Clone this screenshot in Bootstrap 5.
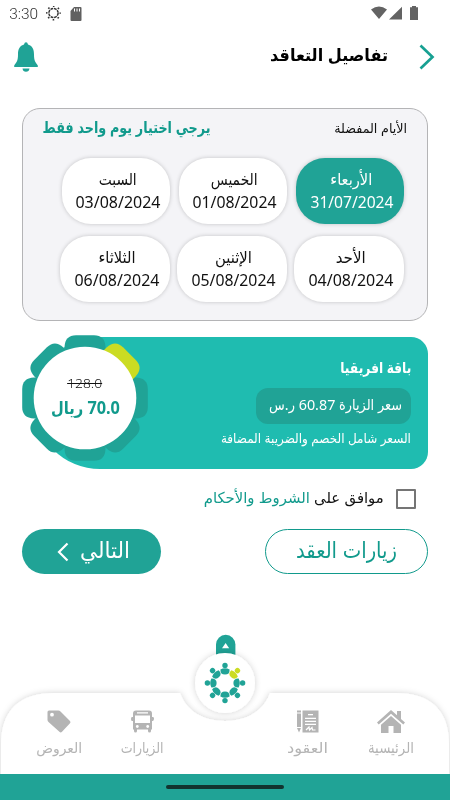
<!DOCTYPE html>
<html lang="ar" dir="rtl">
<head>
<meta charset="utf-8">
<meta name="viewport" content="width=device-width, initial-scale=1">
<title>تفاصيل التعاقد</title>
<link href="https://cdn.jsdelivr.net/npm/bootstrap@5.3.0/dist/css/bootstrap.min.css" rel="stylesheet">
<style>
:root{--teal:#20a396;--aqua:#1fbcb0;--ink:#111}
body{font-family:"Noto Sans","DejaVu Sans Condensed","DejaVu Sans",sans-serif;color:var(--ink);background:#fff;overflow:hidden}
.screen{width:450px;height:800px}
svg{display:block;flex:none}
.fit{display:inline-block;white-space:nowrap;flex:none;direction:rtl}
.fit>span{display:inline-block;transform-origin:100% 50%}
.teal{color:#119a8c}
.status{height:28px;padding:0 30px 0 9px;font:300 15px/28px Roboto,sans-serif;color:#333}
.topbar{height:80px;padding:2px 15px 24px 14px}
.topbar h1{font-size:17px;line-height:28px;margin:0 31px 4px 0}
.days{margin:0 22px;height:213px;border:1px solid #b4b4b6;border-radius:18px;background:#f4f4f7;padding:8px 19px 0}
.days-head{height:22px;line-height:22px;padding:0 1px}
.days-head .hint{font-size:15.5px;font-weight:700;line-height:20px}
.days-head .cap{font-size:13px}
.slots{margin-top:19px;gap:12px}
.slot-row{gap:9px;margin-right:4px}
.slot-row.wide{gap:7px}
.slot{width:108px;height:66px;border-radius:29px;background:#fff;box-shadow:0 0 4px rgba(0,0,0,.2);font-size:16px;line-height:23px;padding:10px 0 0 3px}
.wide .slot{width:110px}
.slot.on{background:var(--teal);color:#fff}
.slot .date{font-size:15.5px}
.offer{margin:16px 22px 0;height:132px}
.offer-bg{background:var(--aqua);border-radius:66px 17px 17px 66px;margin-left:12px;color:#fff;padding:16px 17px 0 0;height:132px;width:394px}
.wheel{position:absolute;left:0;top:-2px;width:126px;height:126px}
.price{position:absolute;left:12px;top:35px;width:102px;height:60px}
.price .old{font-size:13.5px;line-height:22px;font-weight:300}
.price .old>span{text-decoration:line-through}
.price .now{font-size:17px;line-height:28px;font-weight:700}
.offer .ttl{font-size:15px;font-weight:700;line-height:28px}
.offer .rate{height:36px;width:155px;border-radius:12px;background:var(--teal);margin-top:7px;font-size:15px;line-height:32px;padding-right:9px}
.offer .note{font-size:13px;line-height:26px;margin-top:1px}
.terms{height:30px;margin:15px 34px 0;gap:12px;font-size:15px;line-height:22px}
.terms .fit{margin-bottom:4px}
.tick{width:20px;height:20px;border:2px solid #757575;border-radius:1px}
.actions{margin:15px 22px 0}
.pill{height:45px;border-radius:23px;font-size:22px;line-height:34px;padding:0 2px 4px 0;font-weight:400}
.pill.line{width:163px;border:1px solid #119a8c;color:#119a8c;padding:0 2px 6px 2px}
.pill.full{width:139px;background:var(--teal);border:0;color:#fff;gap:14px;padding:0 0 0 6px}
.pill.full .fit{margin-bottom:6px}
.dock{height:160px;width:450px}
.dock-bg{position:absolute;left:0;top:0}
.tabs{position:absolute;left:0;right:0;top:96px;color:#b4b4b4;font-size:14.5px}
.tab-item{width:70px;line-height:22px;gap:3px}
#tab-home{margin-right:24px}
#tab-deals{margin-right:13px}
#tab-visits{margin-right:96px}
#tab-offers{margin-right:13px}
.homebar{background:var(--teal);height:26px}
.homebar i{width:118px;height:4px;border-radius:2px;background:#12332f}
</style>
<script src="https://cdn.jsdelivr.net/npm/bootstrap@5.3.0/dist/js/bootstrap.bundle.min.js"></script>
</head>
<body>
<div class="screen d-flex flex-column">
  <div class="status d-flex align-items-center" dir="ltr">
    <span class="fit" data-w="29"><span dir="ltr">3:30</span></span>
    <svg class="ms-2" width="16" height="16" viewBox="0 0 16 16" fill="none" stroke="#333"><circle cx="7.500" cy="7" r="4.600" stroke-width="1.500" stroke-dasharray="2.800 .8"/><circle cx="7.500" cy="7" r="6.700" stroke-width="1.500" stroke-dasharray="1.600 3.660" stroke-dashoffset=".8"/></svg>
    <svg width="12" height="15" viewBox="0 0 12 15" class="ms-2"><path fill="#606060" d="M4 0h6.500q1 0 1 1v12q0 1-1 1h-9q-1 0-1-1V4z"/><path stroke="#fff" d="M4.500 1.500v3M7 1.500v3M9.500 1.500v3"/></svg>
    <svg class="ms-auto" width="49" height="16" viewBox="0 0 49 16" fill="#636363"><path d="M0 3.500Q8 -2.300 16 3.500L8 13zM18 13.500 31 .7v12.800zM39 1.200h2V0h4v1.200h2v12.800h-8z"/></svg>
  </div>

  <header class="topbar d-flex align-items-center">
    <svg width="16" height="26" viewBox="0 0 16 26" fill="none" stroke="#17a092" stroke-width="2.700"><path d="M1.500 1.500 13.500 13 1.500 24.500"/></svg>
    <h1 class="fw-bold text-black"><span class="fit" data-w="118"><span>تفاصيل التعاقد</span></span></h1>
    <svg class="me-auto" width="24" height="30" viewBox="0 0 24 30" fill="#20a396"><path d="M10 2.500Q10.500.3 12 .3T14 2.500C19 4 20 8 20 12.500 20 19 21.500 20 23.800 23.500V25H.2V23.500C2.500 20 4 19 4 12.500 4 8 5 4 10 2.500zM8.500 26.500h7Q15 29.700 12 29.700T8.500 26.500z"/></svg>
  </header>

  <section class="days">
    <div class="days-head d-flex justify-content-between">
      <span class="fit cap" data-w="73"><span>الأيام المفضلة</span></span>
      <span class="fit hint teal" data-w="168"><span>يرجي اختيار يوم واحد فقط</span></span>
    </div>
    <div class="slots d-flex flex-column">
      <div class="slot-row d-flex">
        <div class="slot on d-flex flex-column align-items-center"><span class="fit" data-w="42"><span>الأربعاء</span></span><span class="fit date" data-w="83"><span dir="ltr">31/07/2024</span></span></div>
        <div class="slot d-flex flex-column align-items-center"><span class="fit" data-w="47"><span>الخميس</span></span><span class="fit date" data-w="84"><span dir="ltr">01/08/2024</span></span></div>
        <div class="slot d-flex flex-column align-items-center"><span class="fit" data-w="38"><span>السبت</span></span><span class="fit date" data-w="85"><span dir="ltr">03/08/2024</span></span></div>
      </div>
      <div class="slot-row wide d-flex">
        <div class="slot d-flex flex-column align-items-center"><span class="fit" data-w="30"><span>الأحد</span></span><span class="fit date" data-w="85"><span dir="ltr">04/08/2024</span></span></div>
        <div class="slot d-flex flex-column align-items-center"><span class="fit" data-w="37"><span>الإثنين</span></span><span class="fit date" data-w="84"><span dir="ltr">05/08/2024</span></span></div>
        <div class="slot d-flex flex-column align-items-center"><span class="fit" data-w="37"><span>الثلاثاء</span></span><span class="fit date" data-w="85"><span dir="ltr">06/08/2024</span></span></div>
      </div>
    </div>
  </section>

  <section class="offer position-relative">
    <div class="offer-bg d-flex flex-column align-items-start">
      <span class="fit ttl" data-w="71"><span>باقة افريقيا</span></span>
      <div class="rate"><span class="fit" data-w="133"><span>سعر الزيارة 60.87 ر.س</span></span></div>
      <span class="fit note" data-w="190"><span>السعر شامل الخصم والضريبة المضافة</span></span>
    </div>
    <svg class="wheel" viewBox="-63 -63 126 126" fill="#20a396">
      <defs><path id="petal" d="M-20.500-40V-51Q-20-62.800-9-62.800H9Q20-62.800 20.500-51V-40z"/></defs>
      <use href="#petal"/><use href="#petal" transform="rotate(90)"/><use href="#petal" transform="rotate(135)"/><use href="#petal" transform="rotate(180)"/><use href="#petal" transform="rotate(225)"/><use href="#petal" transform="rotate(270)"/><use href="#petal" transform="rotate(315)"/><use href="#petal" transform="rotate(45)" fill="#cbdc23"/>
      <circle r="51.300" fill="#fff"/>
    </svg>
    <div class="price d-flex flex-column align-items-center">
      <span class="fit old" data-w="35"><span dir="ltr">128.0</span></span>
      <span class="fit now teal" data-w="69"><span>70.0 ريال</span></span>
    </div>
  </section>

  <div class="terms d-flex align-items-center">
    <span class="tick"></span>
    <span class="fit" data-w="180"><span>موافق على <span class="teal">الشروط والأحكام</span></span></span>
  </div>

  <div class="actions d-flex justify-content-between">
    <button class="btn pill line"><span class="fit" data-w="101"><span>زيارات العقد</span></span></button>
    <button class="btn pill full d-flex align-items-center justify-content-center"><span class="fit" data-w="50"><span>التالي</span></span><svg width="12" height="20" viewBox="0 0 12 20" fill="none" stroke="#fff" stroke-width="2.200"><path d="M10.500 1.500 2 10l8.500 8.500"/></svg></button>
  </div>

  <nav class="dock position-relative mt-auto">
    <svg class="dock-bg" width="450" height="160" viewBox="0 614 450 160">
      <defs>
        <filter id="soft" x="-10%" y="-20%" width="120%" height="140%"><feDropShadow dx="0" dy="0" stdDeviation="3" flood-color="#000" flood-opacity=".18"/></filter>
        <g id="person"><circle cy="-17.600" r="2.700"/><path d="M-4.600-13.600Q0-16 4.600-13.600 4.800-8.400 0-8.400T-4.600-13.600z"/></g>
      </defs>
      <path filter="url(#soft)" fill="#fff" d="M1 780V745Q1 693 55 693H180C186 710 202 721 225 721S264 710 270 693H395Q449 693 449 745V780z"/>
      <path fill="#20a396" d="M216 656V644.500a9.700 9.700 0 0 1 19.400 0V656z"/>
      <path fill="#fff" d="m225.600 643 3.600 5.200h-7.200z"/>
      <circle cx="225" cy="683" r="30" fill="#fff" filter="url(#soft)"/>
      <g transform="translate(225 683)" fill="#20a396"><use href="#person"/><use href="#person" transform="rotate(45)" fill="#cbdc23"/><use href="#person" transform="rotate(90)"/><use href="#person" transform="rotate(135)"/><use href="#person" transform="rotate(180)"/><use href="#person" transform="rotate(225)"/><use href="#person" transform="rotate(270)"/><use href="#person" transform="rotate(315)"/></g>
    </svg>
    <div class="tabs d-flex">
      <div class="tab-item d-flex flex-column align-items-center" id="tab-home"><svg width="28" height="23" viewBox="0 0 28 23" fill="currentColor"><path d="M14 0 20 5.300V1h4v8l4 3.500-1.700 2L14 3.700 1.700 14.500 0 12.500z"/><path d="m14 6 10 8.700V23h-7.500v-7h-5v7H4v-8.300z"/></svg><span class="fit" data-w="46"><span>الرئيسية</span></span></div>
      <div class="tab-item d-flex flex-column align-items-center" id="tab-deals"><svg width="22" height="23" viewBox="0 0 22 23" fill="currentColor"><path d="M0 3.500h4V18l-2 4.500L0 18zM0 .5h4v2H0zM5.500.5H21.500V22.500H5.500z"/><path fill="none" stroke="#fff" stroke-width="1.200" d="M11 4.700h5M8 8.300h11M8 11.300h11M8 14.300h11M0 17.500h4M9 20l3-3 .5 3 2.500-2.500.5 2.500h3"/></svg><span class="fit" data-w="41"><span>العقود</span></span></div>
      <div class="tab-item d-flex flex-column align-items-center" id="tab-visits"><svg width="23" height="23" viewBox="0 0 23 23" fill="currentColor"><path d="M5 .5h13q3 0 3 3V7h1q1 0 1 1.500T22 11h-1v8.500h-1V21q0 1.500-1.500 1.500T17 21v-1.500H6V21q0 1.500-1.500 1.500T3 21v-1.500H2V11H1Q0 11 0 9t1-2h1V3.500q0-3 3-3z"/><path fill="#fff" d="M6 2.300h11v1.200H6zM4 5.500h15V13H4z"/><circle cx="6.300" cy="16.500" r="1.400" fill="#fff"/><circle cx="16.700" cy="16.500" r="1.400" fill="#fff"/></svg><span class="fit" data-w="43"><span>الزيارات</span></span></div>
      <div class="tab-item d-flex flex-column align-items-center" id="tab-offers"><svg width="24" height="23" viewBox="0 0 24 23" fill="currentColor"><path fill-rule="evenodd" d="M2 .5h9.500q1 0 2 1L23 11q1 1.200 0 2.300l-8 8.500q-1.300 1.200-2.600 0L1.500 12Q.5 11 .5 10V2Q.5.5 2 .5zM5 2.800a1.900 1.900 0 1 0 0 3.800 1.900 1.900 0 0 0 0-3.800z"/></svg><span class="fit" data-w="46"><span>العروض</span></span></div>
    </div>
  </nav>
  <div class="homebar d-flex align-items-center justify-content-center"><i></i></div>
</div>
<script>
document.querySelectorAll('.fit').forEach(function(box){
  var inner=box.firstElementChild, w=+box.dataset.w, natural=inner.getBoundingClientRect().width;
  box.style.width=w+'px';
  inner.style.transform='scaleX('+(w/natural)+')';
});
</script>
</body>
</html>
